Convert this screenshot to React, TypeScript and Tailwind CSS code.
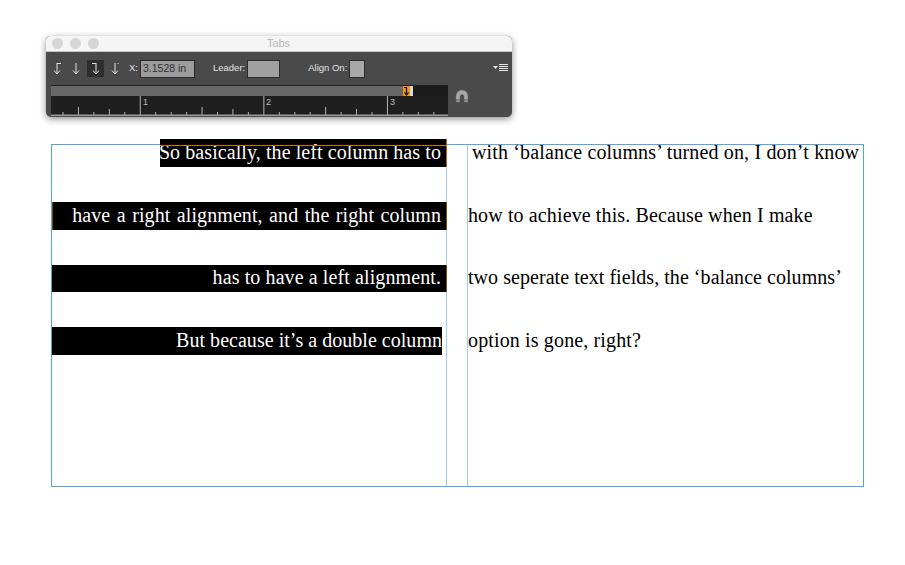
import React from 'react';

const rows = [
  { left: 'So basically, the left column has to', right: 'with ‘balance columns’ turned on, I don’t know', barClass: 'w-[287px] h-[28px] ml-auto leading-[26px]', textClass: 'pr-[5px] tracking-[0.08px]', rightClass: 'pl-[4px] tracking-[0.15px] leading-[26px]', edge: 'border-r border-[#b5690f]' },
  { left: 'have a right alignment, and the right column', right: 'how to achieve this. Because when I make', barClass: 'w-[395px] h-[28px] leading-[26px]', textClass: 'pr-[5px] tracking-[0.08px] [word-spacing:1.4px]', rightClass: 'tracking-[0.12px] leading-[26px]', edge: 'border-x border-x-[#7a4a10]' },
  { left: 'has to have a left alignment.', right: 'two seperate text fields, the ‘balance columns’', barClass: 'w-[395px] h-[27px] leading-[25px]', textClass: 'pr-[5px] tracking-[0.1px]', rightClass: 'tracking-[0.05px] leading-[25px]', edge: 'border-r border-[#7a4a10]' },
  { left: 'But because it’s a double column', right: 'option is gone, right?', barClass: 'w-[390px] h-[28px] leading-[26px]', textClass: 'tracking-[0.03px]', rightClass: 'tracking-[0.14px] leading-[26px]', edge: '' },
];

// tab stop arrows, the bent part differs per alignment
const TabIcon = ({ kind }: { kind: 'left' | 'center' | 'right' | 'decimal' }) => (
  <svg width="10" height="13" viewBox="0 0 10 13" fill="none" stroke="#e0e0e0" strokeWidth="1">
    <path d="M5 1V11.5" />
    <path d="M2 8.5L5 12L8 8.5" />
    {kind === 'left' && <path d="M5 1.5H9" />}
    {kind === 'right' && <path d="M1 1.5H5" />}
    {kind === 'decimal' && <path d="M8 1V3" strokeDasharray="1 1" />}
  </svg>
);

const Ruler = () => {
  const ticks: React.ReactNode[] = [];
  for (let i = 0; i < 26; i++) {
    const x = 12 + i * 15.45;
    const n = i % 8;
    const h = n === 5 ? 20 : n === 1 ? 8 : n === 3 ? 6 : 3;
    ticks.push(<line key={i} x1={x} x2={x} y1={19 - h} y2={19} stroke="#b5b5b5" strokeWidth="1" />);
  }
  return (
    <svg width="397" height="20" viewBox="0 0 397 20" className="block">
      <rect width="397" height="20" fill="#1f1f1f" />
      {ticks}
      <rect y="18.5" width="397" height="1.5" fill="#9a9a9a" />
      <text x="92" y="9" fontSize="9" fill="#bdbdbd" fontFamily="Liberation Sans, sans-serif">1</text>
      <text x="215" y="9" fontSize="9" fill="#bdbdbd" fontFamily="Liberation Sans, sans-serif">2</text>
      <text x="339" y="9" fontSize="9" fill="#bdbdbd" fontFamily="Liberation Sans, sans-serif">3</text>
    </svg>
  );
};

const TabsPanel = () => (
  <div className="ml-[46px] w-[466px] h-[81px] rounded-[5px] overflow-hidden bg-[#4a4a4a] shadow-[0_2px_7px_rgba(0,0,0,0.45)] font-['Liberation_Sans',sans-serif]">
    <div className="relative h-[16px] bg-[#f5f5f5] border-b border-[#c8c8c8] flex items-center justify-center">
      <div className="absolute left-[6px] top-[2px] flex gap-[7px]">
        <span className="w-[11px] h-[11px] rounded-full bg-[#d6d6d6]" />
        <span className="w-[11px] h-[11px] rounded-full bg-[#d6d6d6]" />
        <span className="w-[11px] h-[11px] rounded-full bg-[#d6d6d6]" />
      </div>
      <span className="text-[11px] text-[#b8b8b8] -ml-[1px]">Tabs</span>
    </div>
    <div className="h-[33px] flex items-center pl-[3px] pr-[4px] text-[9.5px] text-[#e2e2e2]">
      <div className="flex items-center gap-[3px]">
        <span className="w-[16px] h-[16px] flex items-center justify-center"><TabIcon kind="left" /></span>
        <span className="w-[16px] h-[16px] flex items-center justify-center"><TabIcon kind="center" /></span>
        <span className="w-[17px] h-[17px] flex items-center justify-center bg-[#2e2e2e] rounded-[1px]"><TabIcon kind="right" /></span>
        <span className="w-[16px] h-[16px] flex items-center justify-center"><TabIcon kind="decimal" /></span>
      </div>
      <span className="ml-[6px]">X:</span>
      <span className="ml-[2px] w-[55px] h-[18px] bg-[#9c9c9c] border border-[#2a2a2a] text-[#333] text-[10.5px] leading-[15px] pl-[2px]">3.1528 in</span>
      <span className="ml-[18px]">Leader:</span>
      <span className="ml-[2px] w-[33px] h-[18px] bg-[#a0a0a0] border border-[#2a2a2a]" />
      <span className="ml-[28px]">Align On:</span>
      <span className="ml-[2px] w-[16px] h-[18px] bg-[#a8a8a8] border border-[#2a2a2a]" />
      <svg width="15" height="9" viewBox="0 0 15 9" className="ml-auto" fill="#e6e6e6">
        <path d="M0 2H5L2.5 5Z" />
        <path d="M6 0H15V1H6ZM6 2H15V3H6ZM6 4H15V5H6ZM6 6H15V7H6Z" />
      </svg>
    </div>
    <div className="flex items-start pl-[5px]">
      <div className="w-[397px] border-t border-[#222]">
        <div className="relative h-[10px] bg-[#1a1a1a]">
          <div className="w-[352px] h-full bg-[#686868]" />
          <div className="absolute left-[352px] top-0 w-[7px] h-[10px] bg-[#f0960f] flex items-start justify-center">
            <svg width="7" height="10" viewBox="0 0 7 10" fill="none" stroke="#111" strokeWidth="1.2"><path d="M1 1.5H3.5V9M1.5 6.5L3.5 9L5.5 6.5" /></svg>
          </div>
          <div className="absolute left-[359px] top-0 w-[3px] h-[10px] bg-[#d8d8d8]" />
        </div>
        <Ruler />
      </div>
      <svg width="14" height="14" viewBox="0 0 14 14" className="ml-[7px] mt-[4px]">
        <path d="M1 13V7A6 6 0 0 1 13 7V13H9V7.5A2 2 0 0 0 5 7.5V13Z" fill="#a8a8a8" stroke="#6a6a6a" strokeWidth="0.5" />
        <path d="M1 11H5M9 11H13" stroke="#4a4a4a" strokeWidth="0.8" />
      </svg>
    </div>
  </div>
);

const App = () => {
  return (
    <div className="w-[905px] h-[565px] bg-white overflow-hidden pt-[36px]">
      <TabsPanel />
      <div className="ml-[51px] mt-[27px] w-[813px] h-[343px] border border-[#4da3f5] relative font-['Liberation_Serif',serif] text-[20px]">
        <div className="absolute left-[394px] top-0 bottom-0 w-[22px] border-x border-[#9dcdfa]" />
        <div className="relative -mt-[6px] flex flex-col gap-[35px]">
          {rows.map((row) => (
            <div key={row.left} className="flex items-start">
              <div className="w-[395px] flex shrink-0">
                <div className={row.barClass + ' bg-black text-white flex justify-end ' + row.edge}>
                  <span className={row.textClass + ' whitespace-nowrap'}>{row.left}</span>
                </div>
              </div>
              <div className={'ml-[21px] whitespace-nowrap text-black ' + row.rightClass}>{row.right}</div>
            </div>
          ))}
        </div>
        <div className="absolute left-[108px] top-0 w-[287px] h-px bg-[#c8720a]" />
      </div>
    </div>
  );
};

export default App;
